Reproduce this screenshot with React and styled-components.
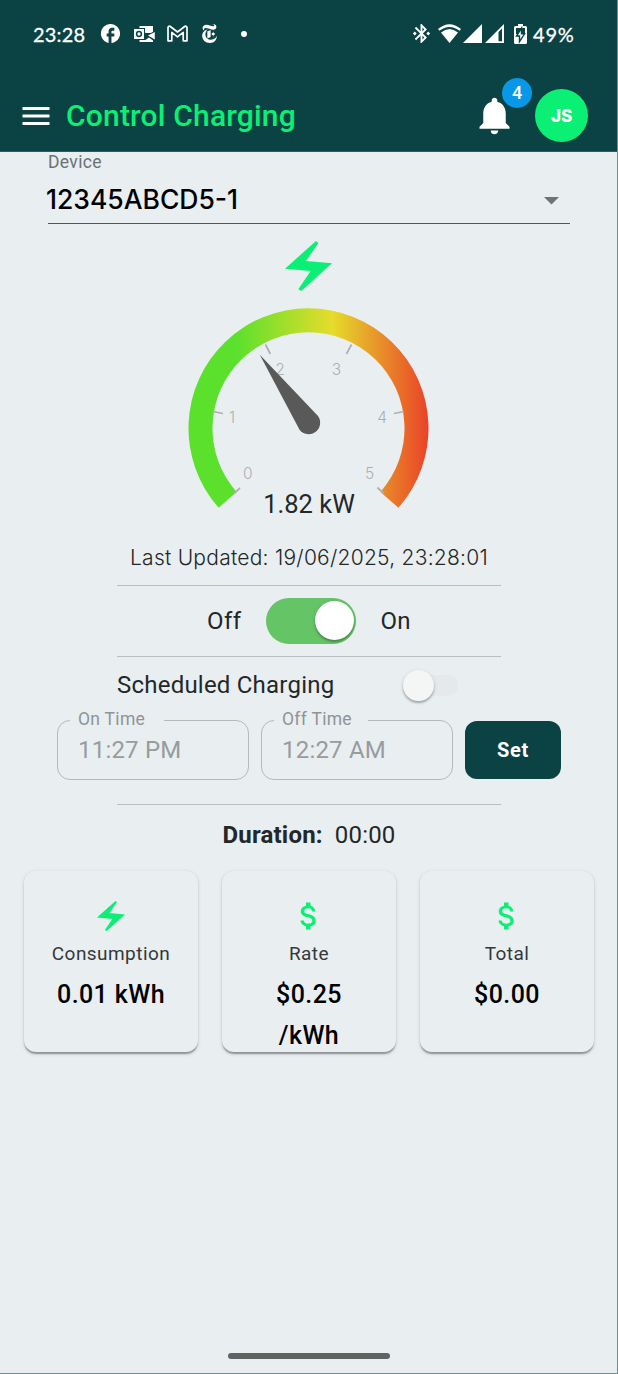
import React from 'react';
import styled, { createGlobalStyle } from 'styled-components';
import { MdMenu, MdNotifications, MdAttachMoney, MdFacebook, MdBluetoothConnected } from 'react-icons/md';
import { SiNewyorktimes } from 'react-icons/si';

const Global = createGlobalStyle`
  *, *::before, *::after { box-sizing: border-box; }
  body { margin: 0; background: #e9eef1; }
`;

const Screen = styled.div`
  width: 618px;
  height: 1374px;
  overflow: hidden;
  display: flex;
  flex-direction: column;
  background: #e9eef1;
  border-right: 1px solid #718f90;
  border-bottom: 1px solid #718f90;
  font-family: Roboto, "Liberation Sans", sans-serif;
  color: #232728;
`;

const Header = styled.header`
  height: 152px;
  margin-right: -1px;
  background: #0b4243;
  border-bottom: 1px solid #2c5e5e;
  flex: none;
`;

const StatusBar = styled.div`
  height: 67px;
  padding: 0 42px 0 33px;
  display: flex;
  align-items: center;
  color: #fff;
  svg { display: block; flex: none; }
`;

const StatusText = styled.span`
  font: 400 20px/24px Lato, sans-serif;
  -webkit-text-stroke: 0.3px #fff;
  width: ${(p) => p.$w}px;
  letter-spacing: ${(p) => p.$ls || 0}px;
  white-space: nowrap;
`;

const Notices = styled.div`
  display: flex;
  align-items: center;
  gap: 12px;
  margin-left: 12px;
  flex: 1;
`;

const Dot = styled.i`
  width: 6px;
  height: 6px;
  margin-left: 10px;
  border-radius: 50%;
  background: #fff;
`;

const Signals = styled.div`
  display: grid;
  grid-template-columns: 28px 25px 22px 29px 13px;
  align-items: center;
  margin-right: 6px;
`;

const AppBar = styled.div`
  height: 72px;
  margin-top: 13px;
  padding: 0 30px 0 18px;
  display: flex;
  align-items: center;
`;

const Title = styled.h1`
  margin: 0 0 0 12px;
  flex: 1;
  font-size: 30px;
  font-weight: 500;
  line-height: 36px;
  letter-spacing: ${(p) => p.$ls}px;
  color: #0aef74;
`;

const BellWrap = styled.div`
  position: relative;
  width: 45px;
  height: 45px;
  margin: -2px 18px 0 0;
  color: #fff;
  svg { display: block; }
`;

const Badge = styled.span`
  position: absolute;
  left: 30px;
  top: -15px;
  width: 30px;
  height: 30px;
  border-radius: 50%;
  background: #0798e8;
  font-size: 18px;
  font-weight: 500;
  line-height: 30px;
  text-align: center;
`;

const Avatar = styled.div`
  width: 53px;
  height: 53px;
  margin-top: -2px;
  border-radius: 50%;
  background: #0aef74;
  color: #fff;
  font: 800 17px/54px Inter, sans-serif;
  text-align: center;
`;

const Select = styled.div`
  width: 522px;
  height: 72px;
  margin-left: 48px;
  border-bottom: 1px solid #2b6866;
  flex: none;
`;

const SelectLabel = styled.div`
  font-size: 17.5px;
  line-height: 20px;
  color: #6c7274;
  letter-spacing: ${(p) => p.$ls}px;
`;

const SelectValue = styled.div`
  height: 52px;
  padding: 1px 11px 0 0;
  margin-left: -2px;
  display: flex;
  align-items: center;
  justify-content: space-between;
  font: 500 26.5px/52px Inter, sans-serif;
  letter-spacing: ${(p) => p.$ls}px;
  color: #000;
  svg { margin-top: 5px; }
`;

const Column = styled.main`
  display: flex;
  flex-direction: column;
  align-items: center;
  padding-left: 1px;
`;

const BoltSvg = styled.svg`
  display: block;
  fill: #0aef74;
`;

const BoltSpace = styled.div`
  padding: 17px 1px 0 0;
`;

const Gauge = styled.svg`
  display: block;
  margin-top: 15px;
`;

const Reading = styled.div`
  margin-top: -23px;
  font-size: 25.5px;
  line-height: 30px;
  letter-spacing: ${(p) => p.$ls}px;
`;

const Updated = styled.div`
  height: 66px;
  padding-top: 24px;
  font: 350 21px/30px Inter, sans-serif;
  letter-spacing: ${(p) => p.$ls}px;
  white-space: nowrap;
`;

const Divider = styled.hr`
  width: 384px;
  height: 1px;
  margin: 0;
  border: 0;
  background: #b9bebf;
`;

const PowerRow = styled.div`
  height: 70px;
  width: 204px;
  display: flex;
  align-items: center;
  justify-content: space-between;
  font-size: 24px;
  letter-spacing: 0.4px;
`;

const Track = styled.div`
  width: 90px;
  height: 46px;
  padding: 3px 2px;
  border-radius: 23px;
  background: #65c466;
  display: flex;
  justify-content: flex-end;
`;

const Thumb = styled.div`
  flex: none;
  width: ${(p) => p.$size}px;
  height: ${(p) => p.$size}px;
  border-radius: 50%;
  background: ${(p) => p.$color};
  box-shadow: 0 2px 2px rgba(0, 0, 0, 0.24), 0 1px 4px rgba(0, 0, 0, 0.12);
`;

const ScheduleRow = styled.div`
  height: 53px;
  width: 384px;
  padding-top: 12px;
  display: flex;
  align-items: flex-start;
  justify-content: space-between;
  font-size: 24px;
  line-height: 32px;
  letter-spacing: ${(p) => p.$ls}px;
`;

const SmallTrack = styled.div`
  width: 48px;
  height: 21px;
  margin: 6px 43px 0 0;
  border-radius: 11px;
  background: #e5e9eb;
  display: flex;
  align-items: center;
  ${Thumb} { margin-left: -7px; }
`;

const TimeRow = styled.div`
  width: 504px;
  display: flex;
  align-items: flex-start;
  gap: 12px;
`;

const TimeField = styled.fieldset`
  width: 192px;
  height: 70px;
  margin: 0;
  padding: 0 0 0 12px;
  border: 1px solid #b4b9ba;
  border-radius: 13px;
  color: #979c9d;
  min-width: 0;
`;

const Legend = styled.legend`
  width: 94px;
  height: 20px;
  padding: 0 0 0 8px;
  font-size: 17.5px;
  line-height: 19px;
  letter-spacing: 0.3px;
  color: #8f9496;
  white-space: nowrap;
`;

const TimeValue = styled.div`
  padding-left: 8px;
  margin-top: 4px;
  font-size: 24px;
  line-height: 32px;
  letter-spacing: 0.2px;
`;

const SetButton = styled.button`
  width: 96px;
  height: 58px;
  margin-top: 11px;
  padding: 0;
  border: 0;
  border-radius: 12px;
  background: #0b4243;
  color: #fff;
  font: 700 20px/58px Roboto, sans-serif;
  letter-spacing: 0.7px;
`;

const Gap = styled.div`
  height: 24px;
`;

const Duration = styled.div`
  height: 66px;
  padding-top: 14px;
  font-size: 24px;
  line-height: 32px;
  letter-spacing: ${(p) => p.$ls}px;
  b { margin-right: 12px; }
`;

const Cards = styled.section`
  display: grid;
  grid-template-columns: repeat(3, 174px);
  gap: 24px;
`;

const Card = styled.article`
  height: 181px;
  padding: 29px 24px 0;
  border-radius: 12px;
  box-shadow: 0 3px 1.5px -1.5px rgba(0, 0, 0, 0.2), 0 1.5px 1.5px rgba(0, 0, 0, 0.14),
    0 1.5px 4.5px rgba(0, 0, 0, 0.12);
  display: flex;
  flex-direction: column;
  align-items: center;
  text-align: center;
`;

const CardIcon = styled.div`
  height: 32px;
  display: flex;
  align-items: center;
  color: #0aef74;
`;

const CardLabel = styled.div`
  margin: 9px -10px 0;
  font-size: 19px;
  line-height: 26px;
  letter-spacing: 0.45px;
  color: #34383a;
`;

const CardValue = styled.div`
  margin-top: 8px;
  font-size: 25px;
  font-weight: 500;
  line-height: 40.5px;
  letter-spacing: 0.4px;
  color: #000;
`;

const HomePill = styled.div`
  width: 162px;
  height: 6px;
  margin: auto auto 14px 228px;
  border-radius: 3px;
  background: #5f6361;
  flex: none;
`;

const Bolt = ({ w, h }) => (
  <BoltSvg width={w} height={h} viewBox="0 0 141 150">
    <path d="M93 0L100 6L63 60L141 67L49 150L40 145L77 90L0 83Z" />
  </BoltSvg>
);

const OutlookIcon = () => (
  <svg width="21" height="18" viewBox="0 0 21 18">
    <path fill="#fff" d="M5.500 1H19V8H11V3H5.500ZM5.500 15H11.500L15 12.500L19 15.500V17H5.500Z" />
    <path fill="#0b4243" d="M11 7.500L14 9.500L20.500 6V7.300L13.500 11.500L11 10Z" />
    <path fill="#fff" d="M0 4H10V14H0ZM14 10.500L20.800 7V14.500Z" />
    <circle cx="5" cy="9" r="2.400" fill="none" stroke="#0b4243" strokeWidth="1.500" />
  </svg>
);

const GmailIcon = () => (
  <svg width="21" height="17" viewBox="0 0 21 17" fill="none" stroke="#fff" strokeWidth="1.700" strokeLinejoin="round">
    <path d="M1 15.800V2.600Q1.200 .9 3 1.300L10.500 7L18 1.300Q19.800 .9 20 2.600V15.800H16.200V7.400L10.500 11.800L4.800 7.400V15.800Z" />
  </svg>
);

const WifiIcon = () => (
  <svg width="23" height="19" viewBox="0 0 23 19" fill="#fff">
    <path d="M0 5Q11.500 -4.500 23 5L21.600 6.800Q11.500 -1 1.400 6.800Z" />
    <path d="M3 8.500Q11.500 1.500 20 8.500L11.500 19Z" />
  </svg>
);

const SignalIcon = ({ partial }) => (
  <svg width="19" height="19" viewBox="0 0 19 19" fill="#fff" fillRule="evenodd">
    <path d={partial ? 'M0 19L19 0V19ZM13.500 8V17.300H17V4.500Z' : 'M0 19L19 0V19Z'} />
  </svg>
);

const BatteryIcon = () => (
  <svg width="13" height="20" viewBox="0 0 13 20">
    <path fill="#fff" d="M4 0h5v2h2.500q1.500 0 1.500 1.500v15q0 1.500-1.500 1.500h-10Q0 20 0 18.500v-15Q0 2 1.500 2H4z" />
    <path fill="#0b4243" d="M2 4h9v6H2z" />
    <path fill="#fff" stroke="#0b4243" strokeWidth="1.400" d="M7.500 4.200L2.500 12H5.500V17.600L10.600 9.800H7.500Z" />
  </svg>
);

const TICKS = [
  { n: 0, x1: 234, y1: 493.5, x2: 240, y2: 488, tx: 247.7, ty: 479 },
  { n: 1, x1: 213, y1: 411.5, x2: 223, y2: 413.5, tx: 232, ty: 423 },
  { n: 2, x1: 265.5, y1: 344.5, x2: 270.3, y2: 354, tx: 280, ty: 374.5 },
  { n: 3, x1: 351.5, y1: 344.5, x2: 346.5, y2: 354, tx: 336.5, ty: 374.5 },
  { n: 4, x1: 404, y1: 411.5, x2: 394, y2: 413.5, tx: 382, ty: 423 },
  { n: 5, x1: 384, y1: 493.5, x2: 377.3, y2: 487.5, tx: 369.7, ty: 479 },
];

const PowerGauge = () => (
  <Gauge width="242" height="206" viewBox="188 306 242 206">
    <defs>
      <linearGradient id="power" gradientUnits="userSpaceOnUse" x1="188.5" x2="428.5" y1="0" y2="0">
        <stop offset="0" stopColor="#5be12c" />
        <stop offset="0.2" stopColor="#5be12c" />
        <stop offset="0.6" stopColor="#e6dc2b" />
        <stop offset="1" stopColor="#ea4228" />
      </linearGradient>
    </defs>
    <path
      fill="url(#power)"
      d="M218.600 507.700A120 120 0 1 1 398.400 507.700L380.400 491.900A96 96 0 1 0 236.600 491.900Z"
    />
    {TICKS.map((t) => (
      <g key={t.n}>
        <line x1={t.x1} y1={t.y1} x2={t.x2} y2={t.y2} stroke="#adb0b1" strokeWidth="1.700" />
        <text x={t.tx} y={t.ty} textAnchor="middle" fontFamily="Inter, sans-serif" fontWeight="350" fontSize="15.500" fill="#adb0b1">
          {t.n}
        </text>
      </g>
    ))}
    <path fill="#595959" d="M259.800 354.800L318 416A11.450 11.450 0 1 1 299.400 429.400Z" />
  </Gauge>
);

export default function App() {
  return (
    <Screen>
      <Global />
      <Header>
        <StatusBar>
          <StatusText $w={54} $ls={0.2}>23:28</StatusText>
          <Notices>
            <MdFacebook size={23} />
            <OutlookIcon />
            <GmailIcon />
            <SiNewyorktimes size={19} />
            <Dot />
          </Notices>
          <Signals>
            <MdBluetoothConnected size={23} />
            <WifiIcon />
            <SignalIcon />
            <SignalIcon partial />
            <BatteryIcon />
          </Signals>
          <StatusText $w={43} $ls={0.8}>49%</StatusText>
        </StatusBar>
        <AppBar>
          <MdMenu size={36} color="#fff" />
          <Title $ls={0.2}>Control Charging</Title>
          <BellWrap>
            <MdNotifications size={45} />
            <Badge>4</Badge>
          </BellWrap>
          <Avatar>JS</Avatar>
        </AppBar>
      </Header>
      <Select>
        <SelectLabel $ls={0.35}>Device</SelectLabel>
        <SelectValue $ls={0}>
          12345ABCD5-1
          <svg width="15" height="8" viewBox="0 0 15 8"><path d="M0 0H15L7.500 7.500Z" fill="#6e7375" /></svg>
        </SelectValue>
      </Select>
      <Column>
        <BoltSpace><Bolt w={47} h={50} /></BoltSpace>
        <PowerGauge />
        <Reading $ls={0}>1.82 kW</Reading>
        <Updated $ls={0.25}>Last Updated: 19/06/2025, 23:28:01</Updated>
        <Divider />
        <PowerRow>
          <span>Off</span>
          <Track><Thumb $size={39} $color="#fff" /></Track>
          <span>On</span>
        </PowerRow>
        <Divider />
        <ScheduleRow $ls={0.22}>
          <span>Scheduled Charging</span>
          <SmallTrack><Thumb $size={31} $color="#f4f5f5" /></SmallTrack>
        </ScheduleRow>
        <TimeRow>
          <TimeField><Legend>On Time</Legend><TimeValue>11:27 PM</TimeValue></TimeField>
          <TimeField><Legend>Off Time</Legend><TimeValue>12:27 AM</TimeValue></TimeField>
          <SetButton>Set</SetButton>
        </TimeRow>
        <Gap />
        <Divider />
        <Duration $ls={0.2}><b>Duration:</b>00:00</Duration>
        <Cards>
          <Card>
            <CardIcon><Bolt w={28} h={30} /></CardIcon>
            <CardLabel>Consumption</CardLabel>
            <CardValue>0.01 kWh</CardValue>
          </Card>
          <Card>
            <CardIcon><MdAttachMoney size={36} /></CardIcon>
            <CardLabel>Rate</CardLabel>
            <CardValue>$0.25 /kWh</CardValue>
          </Card>
          <Card>
            <CardIcon><MdAttachMoney size={36} /></CardIcon>
            <CardLabel>Total</CardLabel>
            <CardValue>$0.00</CardValue>
          </Card>
        </Cards>
      </Column>
      <HomePill />
    </Screen>
  );
}
